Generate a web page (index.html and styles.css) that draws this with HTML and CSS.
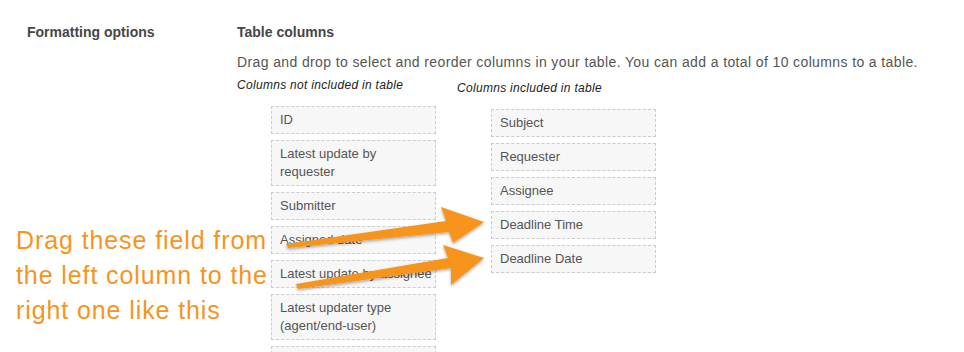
FILE: index.html
```html
<!DOCTYPE html>
<html lang="en">
<head>
    <meta charset="UTF-8">
    <meta name="viewport" content="width=device-width, initial-scale=1.0">
    <title>Formatting options</title>
    <link rel="stylesheet" href="styles.css">
</head>
<body>
    <div class="page">
        <div class="settings-row">
            <div class="row-label">Formatting options</div>
            <div class="row-content">
                <h3>Table columns</h3>
                <p class="description">Drag and drop to select and reorder columns in your table. You can add a total of 10 columns to a table.</p>
                <div class="columns">
                    <div class="column-list">
                        <div class="caption">Columns not included in table</div>
                        <ul class="items">
                            <li>ID</li>
                            <li>Latest update by requester</li>
                            <li>Submitter</li>
                            <li>Assigned date</li>
                            <li>Latest update by assignee</li>
                            <li>Latest updater type (agent/end-user)</li>
                            <li>&nbsp;</li>
                        </ul>
                    </div>
                    <div class="column-list included">
                        <div class="caption">Columns included in table</div>
                        <ul class="items">
                            <li>Subject</li>
                            <li>Requester</li>
                            <li>Assignee</li>
                            <li>Deadline Time</li>
                            <li>Deadline Date</li>
                        </ul>
                    </div>
                </div>
            </div>
        </div>

        <!-- annotation layer -->
        <div class="note">Drag these field from<br>the left column to the<br>right one like this</div>
        <svg class="arrows" width="964" height="352" viewBox="0 0 964 352">
            <defs>
                <filter id="shadow" x="-10%" y="-30%" width="120%" height="160%">
                    <feDropShadow dx="0" dy="1.5" stdDeviation="1.5" flood-color="#000" flood-opacity="0.35"/>
                </filter>
            </defs>
            <g fill="#f7941d" filter="url(#shadow)">
                <polygon points="286,244 446,221 441,207 484,222 453,243 449,232 288,248"/>
                <polygon points="296,284 448,258 443,245 484,258 451,285 451,268 298,289"/>
            </g>
        </svg>
    </div>
</body>
</html>
```

FILE: styles.css
```css
body {
    margin: 0;
    background-color: #fff;
    font-family: "Liberation Sans", Arial, sans-serif;
    color: #555;
}
.page {
    position: relative;
    width: 964px;
    height: 352px;
    overflow: hidden;
}
.settings-row {
    display: flex;
    padding: 22px 0 0 27px;
}
.row-label {
    width: 210px;
    flex-shrink: 0;
    font-size: 14px;
    line-height: 20px;
    font-weight: bold;
    color: #464646;
}
.row-content {
    flex: 1;
}
.row-content h3 {
    margin: 0;
    font-size: 14px;
    line-height: 20px;
    font-weight: bold;
    color: #464646;
}
.description {
    margin: 10px 0 0;
    font-size: 14px;
    line-height: 20px;
    letter-spacing: 0.38px;
    color: #555;
}
.columns {
    display: flex;
    margin-top: 5px;
}
.column-list {
    width: 220px;
}
.column-list.included {
    padding-top: 3px;
}
.caption {
    font-size: 12px;
    line-height: 16px;
    font-style: italic;
    letter-spacing: 0.3px;
    color: #222;
}
.items {
    list-style: none;
    margin: 13px 0 0 34px;
    padding: 0;
    width: 165px;
}
.items li {
    box-sizing: border-box;
    margin-bottom: 6px;
    padding: 4px 2px 4px 8px;
    font-size: 13px;
    line-height: 18px;
    color: #555;
    background-color: #f7f7f7;
    border: 1px dashed #ccc;
}
.note {
    position: absolute;
    left: 16px;
    top: 223px;
    font-size: 25px;
    line-height: 35px;
    letter-spacing: 0.9px;
    color: #f7941d;
}
.arrows {
    position: absolute;
    left: 0;
    top: 0;
    pointer-events: none;
}
```
